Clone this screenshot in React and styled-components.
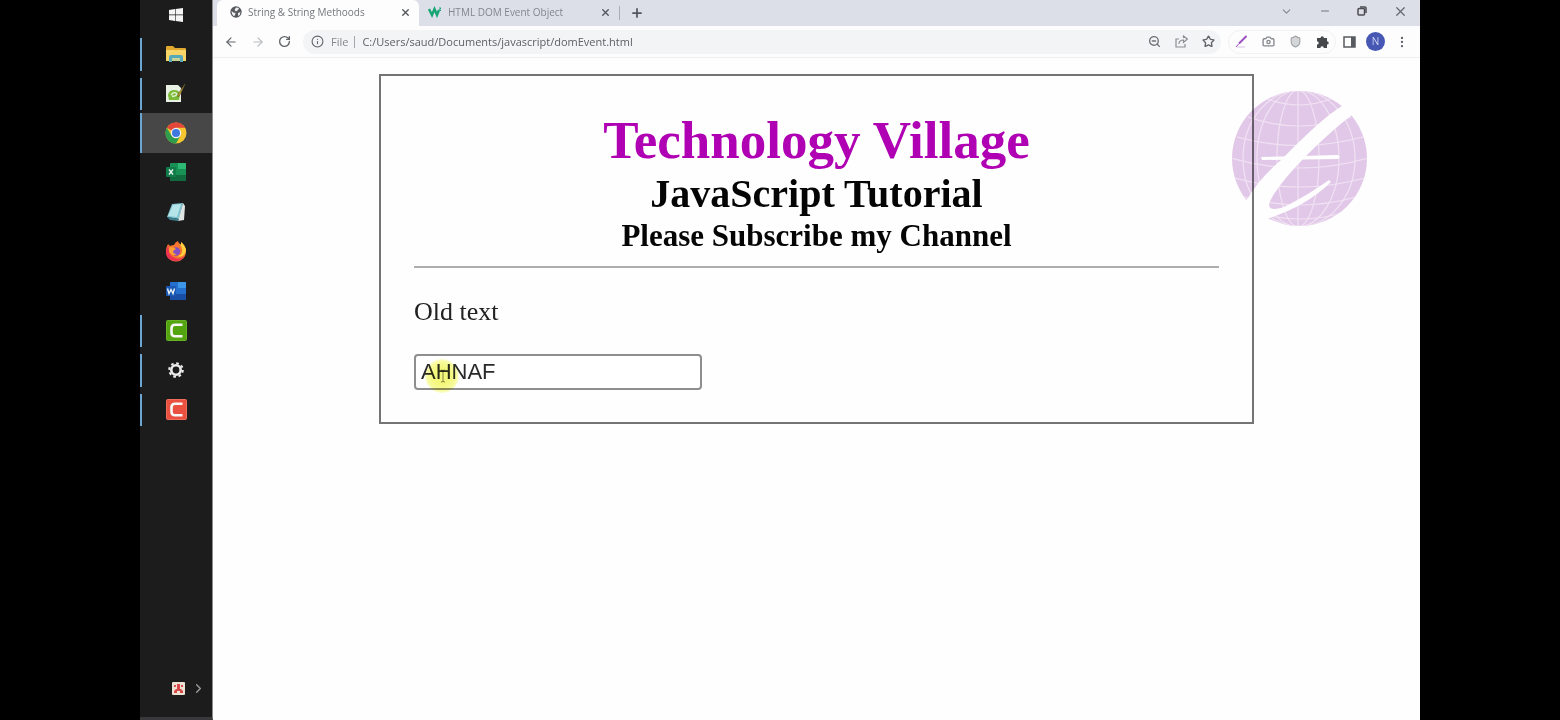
import React from 'react';
import styled, { createGlobalStyle, css } from 'styled-components';
import {
  ArrowLeft, ArrowRight, RotateCw, Info, X, Plus, ChevronDown, ChevronRight, Minus,
  ZoomOut, Star, Camera, Shield, EllipsisVertical,
} from 'lucide-react';

const GlobalStyle = createGlobalStyle`
  * { box-sizing: border-box; }
  body { margin: 0; background: #000; }
  button { border: 0; padding: 0; background: none; color: inherit; font: inherit; }
  svg { display: block; flex: none; }
`;

const uiFont = css`font-family: "Open Sans", "Noto Sans", sans-serif;`;

const Screen = styled.div`
  display: flex;
  min-height: 100vh;
  padding: 0 140px;
  background: #000;
`;

/* Taskbar */
const Taskbar = styled.nav`
  display: flex;
  flex-direction: column;
  flex: none;
  width: 73px;
  background: #1c1c1c;
  border-right: 1px solid #8c8c8c;
  border-bottom: 3px solid #39393b;
  color: #f2f2f2;
`;
const StartButton = styled.button`
  display: flex;
  align-items: center;
  justify-content: center;
  height: 30px;
  margin-bottom: 4px;
`;
const AppList = styled.div`
  display: grid;
  grid-auto-rows: 1fr;
  height: 395px;
`;
const AppButton = styled.button`
  display: flex;
  align-items: center;
  justify-content: center;
  position: relative;
  background: ${(p) => (p.$active ? '#474747' : 'transparent')};
  &::before {
    content: '';
    display: ${(p) => (p.$open ? 'block' : 'none')};
    position: absolute;
    left: 0;
    top: ${(p) => (p.$active ? '0' : '4px')};
    bottom: ${(p) => (p.$active ? '0' : '3px')};
    width: 2px;
    background: #6ba6d2;
  }
`;
const Tray = styled.div`
  display: flex;
  align-items: center;
  justify-content: flex-end;
  gap: 6px;
  margin-top: auto;
  padding: 0 6px 21px 0;
  color: #a0a0a0;
`;

/* Browser chrome */
const Browser = styled.div`
  display: flex;
  flex-direction: column;
  flex: 1;
  min-width: 0;
  background: #fefefe;
  ${uiFont}
`;
const TabStrip = styled.div`
  display: flex;
  align-items: stretch;
  height: 26px;
  background: #dcdfe8;
  color: #54575c;
`;
const Tab = styled.div`
  display: flex;
  align-items: center;
  gap: 6px;
  width: ${(p) => (p.$active ? '202px' : '200px')};
  margin-left: ${(p) => (p.$active ? '4px' : '0')};
  padding: 0 8px 2px ${(p) => (p.$active ? '13px' : '9px')};
  border-radius: 6px 6px 0 0;
  background: ${(p) => (p.$active ? '#fdfdfe' : 'transparent')};
`;
const TabTitle = styled.span`
  flex: 1;
  overflow: hidden;
  font-size: 10px;
  line-height: 14px;
  white-space: nowrap;
  color: ${(p) => (p.$active ? '#74777b' : '#82868f')};
`;
const TabDivider = styled.i`
  width: 1px;
  height: 14px;
  margin: 6px 10px 0 0;
  background: #a9adb7;
`;
const WindowControls = styled.div`
  display: flex;
  align-items: center;
  gap: 26px;
  margin-left: auto;
  padding: 0 12px 4px 0;
`;
const Toolbar = styled.div`
  display: flex;
  align-items: center;
  height: 32px;
  padding: 0 11px;
  background: #fdfdfe;
  border-bottom: 1px solid #eeeff1;
  color: #616468;
`;
const NavButtons = styled.div`
  display: flex;
  gap: 13px;
  margin-right: 12px;
`;
const AddressBar = styled.div`
  display: flex;
  align-items: center;
  flex: 1;
  gap: 7px;
  height: 24px;
  padding: 0 6px 0 8px;
  border-radius: 12px;
  background: #f3f4f6;
`;
const Scheme = styled.span`
  padding-right: 6px;
  border-right: 1px solid #a6a8ab;
  font-size: 11px;
  line-height: 12px;
  color: #85888c;
`;
const AddressInput = styled.input`
  flex: 1;
  min-width: 0;
  border: 0;
  padding: 0;
  background: none;
  ${uiFont}
  font-size: 11px;
  line-height: 16px;
  color: #5d6064;
  outline: none;
`;
const IconRow = styled.div`
  display: flex;
  align-items: center;
  gap: ${(p) => p.$gap || '14px'};
`;
const Extensions = styled(IconRow)`
  height: 24px;
  margin: 0 7px;
  padding: 0 6px;
  border: 1px solid #f0f1f3;
  border-radius: 12px;
`;
const Avatar = styled.button`
  width: 19px;
  height: 19px;
  border-radius: 50%;
  background: #4658b4;
  color: #cdd3f2;
  font-size: 10px;
  line-height: 19px;
`;

/* Page */
const Page = styled.main`
  position: relative;
  flex: 1;
  padding: 16px 166px;
  font-family: "Liberation Serif", serif;
  color: #050505;
`;
const Card = styled.section`
  padding: 32px 33px;
  border: 2px solid #747474;
`;
const Title = styled.h1`
  margin: 0;
  font-size: 53px;
  line-height: 64px;
  text-align: center;
  color: #b000b4;
`;
const Subtitle = styled.h2`
  margin: 0;
  font-size: 40px;
  line-height: 44px;
  text-align: center;
`;
const Tagline = styled.h3`
  margin: 0;
  font-size: 31px;
  line-height: 40px;
  text-align: center;
`;
const Rule = styled.hr`
  height: 2px;
  margin: 10px 0 28px;
  border: 0;
  background: #adadad;
`;
const Paragraph = styled.p`
  margin: 0 0 26px;
  font-size: 26px;
  line-height: 32px;
  color: #222;
`;
const Field = styled.div`
  position: relative;
  width: 288px;
`;
const TextInput = styled.input`
  display: block;
  width: 100%;
  height: 36px;
  padding: 0 5px;
  border: 2px solid #8e8e8e;
  border-radius: 4px;
  background: #fff;
  font-family: "Liberation Sans", sans-serif;
  font-size: 22px;
  color: #2a2a2a;
  outline: none;
`;
const Pointer = styled.span`
  position: absolute;
  left: 11px;
  top: 5px;
  width: 34px;
  height: 34px;
  border-radius: 50%;
  background: radial-gradient(circle, #f3f77c 35%, #f8fb9c 60%, #fdfee0 72%);
  mix-blend-mode: multiply;
  pointer-events: none;
  svg { margin: 10px 0 0 15px; }
`;
const Watermark = styled.div`
  position: absolute;
  top: 12px;
  right: 40px;
  mix-blend-mode: multiply;
  pointer-events: none;
`;

const Windows = () => (
  <svg width="14" height="14" viewBox="0 0 14 14" fill="#f4f4f4">
    <path d="M0 2l6-1v5.600H0zM6.600 .9L14 0v6.600H6.600zM0 7.300h6v5.700l-6-1zM6.600 7.300H14V14l-7.400-1z" />
  </svg>
);
const Folder = () => (
  <svg width="20" height="18" viewBox="0 0 20 18">
    <path d="M0 2q0-1 1-1h6l2 2h10q1 0 1 1v12H0z" fill="#e0a82e" />
    <path d="M0 5h20v11H0z" fill="#f8d568" />
    <path d="M3 17v-5q0-2 2-2h10q2 0 2 2v5h-3v-4H6v4z" fill="#55a9ba" />
    <path d="M6 13h8v3H6z" fill="#c5d59a" />
  </svg>
);
const NotepadPlus = () => (
  <svg width="20" height="20" viewBox="0 0 20 20">
    <path d="M0 2h12l3 3v14H0z" fill="#e9f1e5" />
    <path d="M2 12q1-5 6-5 6 0 6 5l-1 5H3z" fill="#7dbb38" />
    <path d="M5 12q3-4 6-1-1 3-5 2" stroke="#e3f0d2" strokeWidth="1.300" fill="none" />
    <path d="M19 1l-5 11-2 2v-3z" fill="#c4a03b" stroke="#5b5429" strokeWidth=".6" />
  </svg>
);
const Chrome = () => (
  <svg width="22" height="22" viewBox="0 0 22 22">
    <circle cx="11" cy="11" r="10.500" fill="#f6c631" />
    <path d="M11 11L1.900 5.700A10.500 10.500 0 0 1 20.100 5.800H11z" fill="#e24739" />
    <path d="M1.900 5.700A10.500 10.500 0 0 0 11 21.500L15.500 13.600 6.500 13.600z" fill="#2e9e4d" />
    <circle cx="11" cy="11" r="5.200" fill="#f2f3f4" />
    <circle cx="11" cy="11" r="4" fill="#3f78df" />
  </svg>
);
const Office = ({ letter, light, mid, dark, badge }) => (
  <svg width="20" height="20" viewBox="0 0 20 20">
    <rect x="4" y="1" width="16" height="18" rx="1" fill={mid} />
    <path d="M12 1h7q1 0 1 1v5h-8z" fill={light} />
    <path d="M4 13h16v5q0 1-1 1H5q-1 0-1-1z" fill={dark} />
    <rect x="0" y="5" width="10" height="10" rx="1" fill={badge} />
    <path d={letter} fill="none" stroke="#e9f3f2" strokeWidth="1.400" />
  </svg>
);
const Notepad = () => (
  <svg width="20" height="20" viewBox="0 0 20 20">
    <path d="M6 2l11-1-4 16-12-2z" fill="#7fc3d1" />
    <path d="M7 3l8-1-4 13-9-1z" fill="#b5e4e9" />
    <path d="M17 1l2 3-1 14-6 1z" fill="#dfe5e3" />
    <path d="M1 15l12 2-1 2-8-1z" fill="#3e7f8d" />
  </svg>
);
const Firefox = () => (
  <svg width="22" height="22" viewBox="0 0 22 22">
    <path d="M3 4l2 2q2-1 4-1 1-3 4-4 0 2 3 4V2q5 4 5 9a10 10 0 0 1-20 1q0-5 2-8z" fill="#f7762f" />
    <path d="M14 3q4 5 3 9-1 4-5 4 6 3 9-5 0-5-5-9v3z" fill="#ffcf3d" />
    <path d="M1 12q0 9 10 9 6 0 9-5-5 4-10 2-6-2-6-8-1-3 0-5-3 3-3 7z" fill="#ee3352" />
    <circle cx="11" cy="11.500" r="4.200" fill="#8250c4" />
    <path d="M4 8q4-2 7 1l-3 2q0 3 4 3-5 3-8-2z" fill="#ffa030" />
  </svg>
);
const Camtasia = ({ fill, edge }) => (
  <svg width="21" height="21" viewBox="0 0 21 21">
    <rect x=".5" y=".5" width="20" height="20" rx="1" fill={fill} stroke={edge} />
    <path d="M16.500 4.800H9Q5.500 4.800 5.500 8.300v4.400q0 3.500 3.500 3.500h7.500" fill="none" stroke="#f7f7f7" strokeWidth="2.600" />
  </svg>
);
const Gear = () => (
  <svg width="18" height="18" viewBox="0 0 18 18" fill="none" stroke="#ededed">
    <circle cx="9" cy="9" r="4.700" strokeWidth="2.600" />
    <circle cx="9" cy="9" r="6.800" strokeWidth="2" strokeDasharray="2.670 2.670" />
  </svg>
);
const TrayApp = () => (
  <svg width="13" height="13" viewBox="0 0 13 13">
    <rect width="13" height="13" rx="1" fill="#ece2d4" />
    <path d="M2 3h2v2H2zM9 3h2v2H9zM5 2h3v5H5zM2 9l2-2h5l2 2v2H8V9H5v2H2z" fill="#d94a4a" />
  </svg>
);
const Globe = () => (
  <svg width="12" height="12" viewBox="0 0 12 12">
    <circle cx="6" cy="6" r="5.700" fill="#55585d" />
    <path d="M1.500 5l2 1.500 2 .5L5 9.500 3.500 10Q1.500 8 1.500 5zM6 1.500l3 .5-1 2-2 1.500L4.500 4zM8 7l2.500-1Q10.500 9 8 10z" fill="#eceef0" />
  </svg>
);
const W3 = () => (
  <svg width="14" height="12" viewBox="0 0 14 12">
    <path d="M1 3l3 6 2.500-6L9 9l2-5" fill="none" stroke="#18a574" strokeWidth="2.400" />
    <path d="M11 2h2l-1.500 1.500q1.500 0 1 1.500" fill="none" stroke="#18a574" />
  </svg>
);
const Restore = () => (
  <svg width="10" height="10" viewBox="0 0 10 10" fill="none" stroke="#4b4d52" strokeWidth="1.500">
    <rect x="1" y="2.500" width="6.500" height="6.500" rx="1" />
    <path d="M3 1h5q1 0 1 1v5" />
  </svg>
);
const ShareOut = () => (
  <svg width="13" height="13" viewBox="0 0 13 13" fill="none" stroke="#8b8e92" strokeWidth="1.200">
    <path d="M4 4H1v8h9V9" />
    <path d="M4 9q0-4 4.500-4V7.500L12.300 4 8.500 1v2" />
  </svg>
);
const Pen = () => (
  <svg width="13" height="13" viewBox="0 0 13 13" stroke="#9c4fc0" fill="none">
    <path d="M11.500 1L4 8.500" strokeWidth="2" />
    <path d="M4 8.500L1 12" strokeWidth="1" />
    <path d="M2 12h8" stroke="#d8c3e3" />
  </svg>
);
const Puzzle = () => (
  <svg width="13" height="13" viewBox="0 0 13 13" fill="#45484d">
    <path d="M1 3h3.500a1.700 1.700 0 1 1 3.400 0H11v3.200a1.700 1.700 0 1 1 0 3.400V13H7.800a1.700 1.700 0 1 0-3.400 0H1V9.600a1.700 1.700 0 1 0 0-3.400z" />
  </svg>
);
const SidePanel = () => (
  <svg width="13" height="12" viewBox="0 0 13 12">
    <rect x="1" y="1" width="11" height="10" fill="none" stroke="#585b60" strokeWidth="1.500" />
    <path d="M8 1h4v10H8z" fill="#585b60" />
  </svg>
);
const GlobeMark = () => (
  <svg width="160" height="170" viewBox="0 0 160 170">
    <defs>
      <clipPath id="disc"><circle cx="79.500" cy="88.500" r="67.500" /></clipPath>
    </defs>
    <circle cx="79.500" cy="88.500" r="67.500" fill="#e3c9e9" />
    <g clipPath="url(#disc)" fill="none" stroke="#f1e3f4" strokeWidth="1.200">
      <path d="M78 21v135" />
      <ellipse cx="78" cy="88.500" rx="21" ry="68" />
      <ellipse cx="78" cy="88.500" rx="41" ry="68" />
      <ellipse cx="79" cy="88.500" rx="56" ry="68" />
      <path d="M45 28q34 14 68 0M28 47q51 18 103 0M17 67q62 17 126 0M11 88q68 20 137 0M14 108q66 18 131 0M24 127q56 16 112 0M42 144q38 10 76 0" />
    </g>
    <path d="M17 139L28 128Q39 109 61 90Q103 47 122 36L140 30L132 45Q112 60 88 84Q65 107 54 124Q47 135 50 138Q57 141 70 134Q91 123 109 110L111 112Q85 137 49 148L30 157z" fill="#fff" />
    <path d="M41 87L118 85Q121 87 118 89L42 90z" fill="#fff" />
  </svg>
);

const apps = [
  { name: 'File Explorer', icon: <Folder />, open: true },
  { name: 'Notepad++', icon: <NotepadPlus />, open: true },
  { name: 'Chrome', icon: <Chrome />, open: true, active: true },
  { name: 'Excel', icon: <Office letter="M3 7.500l4 5M7 7.500l-4 5" light="#2db873" mid="#189154" dark="#126b3e" badge="#107c48" /> },
  { name: 'Notepad', icon: <Notepad /> },
  { name: 'Firefox', icon: <Firefox /> },
  { name: 'Word', icon: <Office letter="M1.500 7.500l1.500 5 2-4 2 4 1.500-5" light="#3e96e8" mid="#2470cf" dark="#184fa5" badge="#1b58b5" /> },
  { name: 'Camtasia', icon: <Camtasia fill="#53a40f" edge="#67b328" />, open: true },
  { name: 'Settings', icon: <Gear />, open: true },
  { name: 'Camtasia Recorder', icon: <Camtasia fill="#e9503f" edge="#f06c5a" />, open: true },
];

export default function App() {
  return (
    <Screen>
      <GlobalStyle />
      <Taskbar>
        <StartButton aria-label="Start"><Windows /></StartButton>
        <AppList>
          {apps.map((a) => (
            <AppButton key={a.name} aria-label={a.name} $open={a.open} $active={a.active}>{a.icon}</AppButton>
          ))}
        </AppList>
        <Tray>
          <TrayApp />
          <button aria-label="Show hidden icons"><ChevronRight size={15} strokeWidth={2} /></button>
        </Tray>
      </Taskbar>

      <Browser>
        <TabStrip>
          <Tab $active>
            <Globe />
            <TabTitle $active>String &amp; String Methoods</TabTitle>
            <button aria-label="Close tab"><X size={11} strokeWidth={3} /></button>
          </Tab>
          <Tab>
            <W3 />
            <TabTitle>HTML DOM Event Object</TabTitle>
            <button aria-label="Close tab"><X size={11} strokeWidth={3} /></button>
          </Tab>
          <TabDivider />
          <button aria-label="New tab"><Plus size={14} strokeWidth={3} /></button>
          <WindowControls>
            <button aria-label="Search tabs"><ChevronDown size={13} color="#85888f" /></button>
            <button aria-label="Minimize"><Minus size={12} color="#74777d" /></button>
            <button aria-label="Restore"><Restore /></button>
            <button aria-label="Close"><X size={15} color="#66696f" /></button>
          </WindowControls>
        </TabStrip>

        <Toolbar>
          <NavButtons>
            <button aria-label="Back"><ArrowLeft size={14} /></button>
            <button aria-label="Forward"><ArrowRight size={14} color="#b9bbbe" /></button>
            <button aria-label="Reload"><RotateCw size={13} strokeWidth={2.5} /></button>
          </NavButtons>
          <AddressBar>
            <Info size={13} />
            <Scheme>File</Scheme>
            <AddressInput aria-label="Address" defaultValue="C:/Users/saud/Documents/javascript/domEvent.html" />
            <IconRow>
              <button aria-label="Zoom"><ZoomOut size={13} color="#6d7074" strokeWidth={2.5} /></button>
              <button aria-label="Share"><ShareOut /></button>
              <button aria-label="Bookmark"><Star size={13} strokeWidth={2.5} /></button>
            </IconRow>
          </AddressBar>
          <Extensions>
            <button aria-label="Pen"><Pen /></button>
            <button aria-label="Screenshot"><Camera size={13} color="#85888c" strokeWidth={2.5} /></button>
            <button aria-label="Shield"><Shield size={13} color="#a0a2a5" fill="#d3d5d7" /></button>
            <button aria-label="Extensions"><Puzzle /></button>
          </Extensions>
          <IconRow $gap="10px">
            <button aria-label="Side panel"><SidePanel /></button>
            <Avatar aria-label="Profile">N</Avatar>
            <button aria-label="Menu"><EllipsisVertical size={14} /></button>
          </IconRow>
        </Toolbar>

        <Page>
          <Card>
            <Title>Technology Village</Title>
            <Subtitle>JavaScript Tutorial</Subtitle>
            <Tagline>Please Subscribe my Channel</Tagline>
            <Rule />
            <Paragraph>Old text</Paragraph>
            <Field>
              <TextInput aria-label="Name" defaultValue="AHNAF" />
              <Pointer>
                <svg width="6" height="14" viewBox="0 0 6 14" fill="none" stroke="#7d803c">
                  <path d="M1 1q2 0 2 1v10q0 1-2 1M5 1q-2 0-2 1M3 12q0 1 2 1" />
                </svg>
              </Pointer>
            </Field>
          </Card>
          <Watermark><GlobeMark /></Watermark>
        </Page>
      </Browser>
    </Screen>
  );
}
